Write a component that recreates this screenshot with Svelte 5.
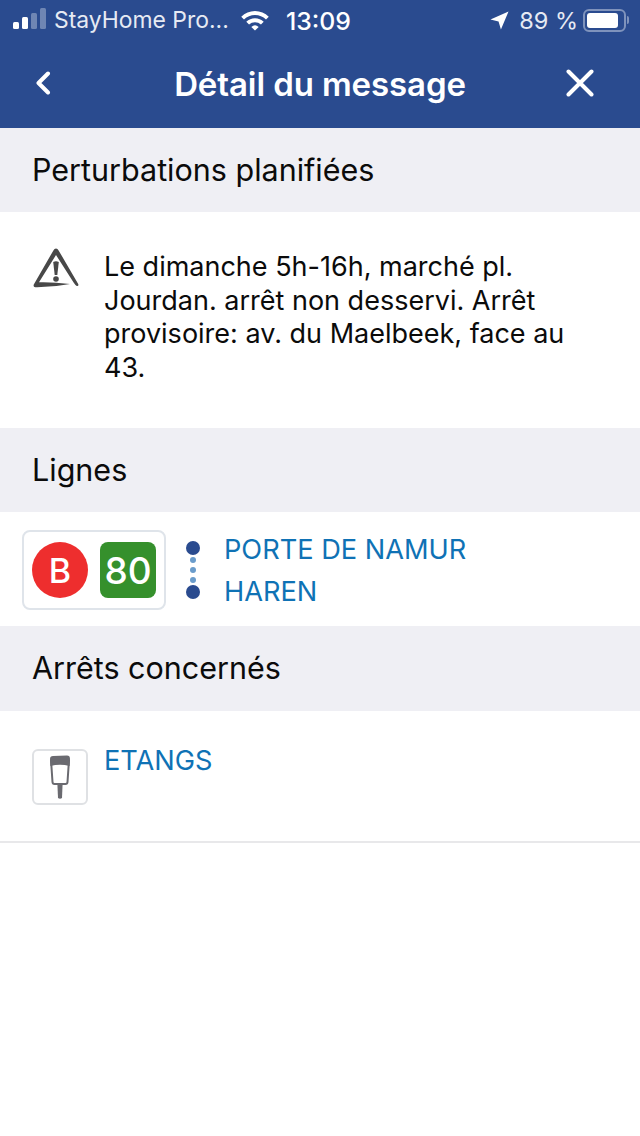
<script>
  const lines = ['PORTE DE NAMUR', 'HAREN'];
  const message = 'Le dimanche 5h-16h, marché pl. Jourdan. arrêt non desservi. Arrêt provisoire: av. du Maelbeek, face au 43.';
</script>

<div class="screen">
  <header>
    <div class="status">
      <div class="status-left">
        <svg class="signal" width="33" height="24" viewBox="0 0 33 24">
          <rect x="0" y="15" width="6" height="7" rx="1.5" fill="#fff" />
          <rect x="9" y="10" width="6" height="12" rx="1.5" fill="#fff" />
          <rect x="18" y="6" width="6" height="16" rx="1.5" fill="#6f86b4" />
          <rect x="27" y="1" width="6" height="21" rx="1.5" fill="#6f86b4" />
        </svg>
        <span class="carrier">StayHome Pro...</span>
        <svg class="wifi" width="30" height="22" viewBox="0 0 32 24">
          <path d="M1 8.5 A21 21 0 0 1 31 8.5 L28 11.5 A17 17 0 0 0 4 11.5 Z" fill="#fff" />
          <path d="M6.5 14 A13.5 13.5 0 0 1 25.5 14 L22.5 17 A9.5 9.5 0 0 0 9.5 17 Z" fill="#fff" />
          <path d="M12 19.5 A6 6 0 0 1 20 19.5 L16 23.5 Z" fill="#fff" />
        </svg>
      </div>
      <span class="time">13:09</span>
      <div class="status-right">
        <svg class="arrow" width="19" height="19" viewBox="0 0 20 20">
          <path d="M19.5 0.5 L11.5 19.5 L9 11 L0.5 9 Z" fill="#fff" />
        </svg>
        <span class="battery-text">89 %</span>
        <div class="battery"><div class="battery-level" style="width: 89%"></div></div>
        <div class="battery-tip"></div>
      </div>
    </div>
    <div class="nav">
      <svg class="back" width="16" height="24" viewBox="0 0 16 24">
        <path d="M13 2.5 L3.5 12 L13 21.5" fill="none" stroke="#fff" stroke-width="4" stroke-linecap="round" stroke-linejoin="round" />
      </svg>
      <h1>Détail du message</h1>
      <svg class="close" width="28" height="28" viewBox="0 0 28 28">
        <path d="M2.5 2.5 L25.5 25.5 M25.5 2.5 L2.5 25.5" fill="none" stroke="#fff" stroke-width="4" stroke-linecap="round" />
      </svg>
    </div>
  </header>

  <div class="section-title">Perturbations planifiées</div>
  <div class="message">
    <svg class="warning" width="46" height="40" viewBox="0 0 46 40">
      <path d="M23 0.6 Q24.6 0.6 25.6 2.4 L45.2 36 Q46 38.4 43.8 38 Q42 37 40.6 34.6 L23 7 L6 34.2 Q20 33.8 37 36 Q20 39.4 2.2 39.2 Q0 39 0.8 36.6 L20.4 2.4 Q21.4 0.6 23 0.6 Z" fill="#484848" />
      <path d="M20.2 14 Q23 12.4 25.8 14 L24.3 27 L21.7 27 Z" fill="#484848" />
      <circle cx="23" cy="31" r="2.8" fill="#484848" />
    </svg>
    <p>{message}</p>
  </div>

  <div class="section-title">Lignes</div>
  <div class="line-row">
    <div class="badges">
      <div class="mode">B</div>
      <div class="number">80</div>
    </div>
    <div class="route">
      <span class="stop-dot"></span>
      <span class="small-dot"></span>
      <span class="small-dot"></span>
      <span class="small-dot"></span>
      <span class="stop-dot"></span>
    </div>
    <div class="destinations">
      {#each lines as line}
        <span class="link">{line}</span>
      {/each}
    </div>
  </div>

  <div class="section-title third">Arrêts concernés</div>
  <div class="stop-row">
    <div class="stop-icon">
      <svg width="22" height="46" viewBox="0 0 22 46">
        <path d="M2 6 L3.5 28 Q3.6 30 5.5 30 L16.5 30 Q18.4 30 18.5 28 L20 6" fill="#fff" stroke="#6a6a70" stroke-width="2" />
        <path d="M1 5 Q1 2 4 2 L18 1.6 Q21 1.6 21 5 L20.6 12 Q11 9.6 1.4 12 Z" fill="#6a6a70" />
        <path d="M8.4 30 L13.6 30 L13 44 Q11 45.4 9 44 Z" fill="#6a6a70" />
      </svg>
    </div>
    <span class="link">ETANGS</span>
  </div>
</div>

<style>
  :global(body) {
    background: #fff;
  }

  .screen {
    width: 640px;
    height: 1136px;
    overflow: hidden;
    background: #fff;
    font-family: Inter, "Liberation Sans", sans-serif;
    color: #0b0b0b;
  }

  header {
    height: 128px;
    background: #2a4b8f;
    color: #fff;
  }

  .status {
    height: 40px;
    display: flex;
    align-items: center;
    position: relative;
    padding: 0 11px 0 13px;
  }

  .status-left {
    display: flex;
    align-items: center;
    flex: 1;
  }

  .signal {
    margin-right: 8px;
    margin-top: -2px;
  }

  .carrier {
    font-size: 22.9px;
    color: #e6eaf3;
    white-space: nowrap;
  }

  .wifi {
    margin-left: 11px;
    margin-top: -1px;
  }

  .time {
    position: absolute;
    left: 286px;
    top: 6px;
    font-size: 24.8px;
    font-weight: 500;
  }

  .arrow {
    margin-top: 1px;
  }

  .status-right {
    display: flex;
    align-items: center;
  }

  .battery-text {
    font-size: 23.5px;
    color: #e6eaf3;
    margin-left: 10px;
    margin-right: 5px;
  }

  .battery {
    width: 43px;
    height: 23px;
    box-sizing: border-box;
    border: 2px solid #7f93bc;
    border-radius: 6px;
    padding: 2px;
  }

  .battery-level {
    height: 100%;
    background: #fff;
    border-radius: 3px;
  }

  .battery-tip {
    width: 2px;
    height: 8px;
    margin-left: 1px;
    background: #7f93bc;
    border-radius: 0 2px 2px 0;
  }

  .nav {
    height: 88px;
    display: grid;
    grid-template-columns: 1fr auto 1fr;
    align-items: center;
  }

  .back {
    margin-top: -2px;
    margin-left: 35px;
  }

  .close {
    margin-top: -3px;
    margin-right: 46px;
    justify-self: end;
  }

  h1 {
    margin: 0;
    font-size: 33px;
    font-weight: 600;
    letter-spacing: -0.1px;
  }

  .section-title {
    height: 84px;
    box-sizing: border-box;
    padding: 0 32px 2px;
    display: flex;
    align-items: center;
    background: #efeff4;
    font-size: 30.5px;
  }

  .section-title.third {
    height: 85px;
  }

  .message {
    height: 216px;
    box-sizing: border-box;
    padding: 36px 50px 0 33px;
    display: flex;
    align-items: flex-start;
  }

  .warning {
    flex: none;
    margin-right: 25px;
  }

  .message p {
    margin: 2px 0 0;
    font-size: 27px;
    line-height: 33.5px;
  }

  .line-row {
    height: 114px;
    box-sizing: border-box;
    padding: 18px 0 0 22px;
    display: flex;
    align-items: flex-start;
  }

  .badges {
    width: 144px;
    height: 80px;
    box-sizing: border-box;
    border: 2px solid #dfe4ea;
    border-radius: 8px;
    padding: 10px 8px;
    display: flex;
    justify-content: space-between;
  }

  .mode {
    width: 56px;
    height: 56px;
    border-radius: 50%;
    background: #ee2e2e;
    color: #fff;
    font-size: 34px;
    font-weight: 500;
    display: flex;
    align-items: center;
    justify-content: center;
  }

  .number {
    width: 56px;
    height: 56px;
    border-radius: 8px;
    background: #35902c;
    color: #fff;
    font-size: 37px;
    font-weight: 500;
    display: flex;
    align-items: center;
    justify-content: center;
  }

  .route {
    width: 14px;
    margin-left: 20px;
    margin-top: 13px;
    display: flex;
    flex-direction: column;
    align-items: center;
    gap: 4px;
  }

  .stop-dot {
    width: 14px;
    height: 14px;
    margin: -2px 0;
    border-radius: 50%;
    background: #2a4b8f;
  }

  .small-dot {
    width: 6px;
    height: 6px;
    border-radius: 50%;
    background: #6a9ccb;
  }

  .destinations {
    display: flex;
    flex-direction: column;
    gap: 10px;
    margin-left: 24px;
    margin-top: 4px;
  }

  .link {
    color: #0f72b5;
    font-size: 27.2px;
    line-height: 32px;
  }

  .stop-row {
    height: 132px;
    box-sizing: border-box;
    padding: 34px 0 0 32px;
    border-bottom: 2px solid #e8e8ea;
    display: flex;
    align-items: flex-start;
  }

  .stop-icon {
    width: 56px;
    height: 56px;
    margin-top: 4px;
    box-sizing: border-box;
    border: 2px solid #dfe1e4;
    border-radius: 6px;
    display: flex;
    align-items: center;
    justify-content: center;
    margin-right: 16px;
  }
</style>
